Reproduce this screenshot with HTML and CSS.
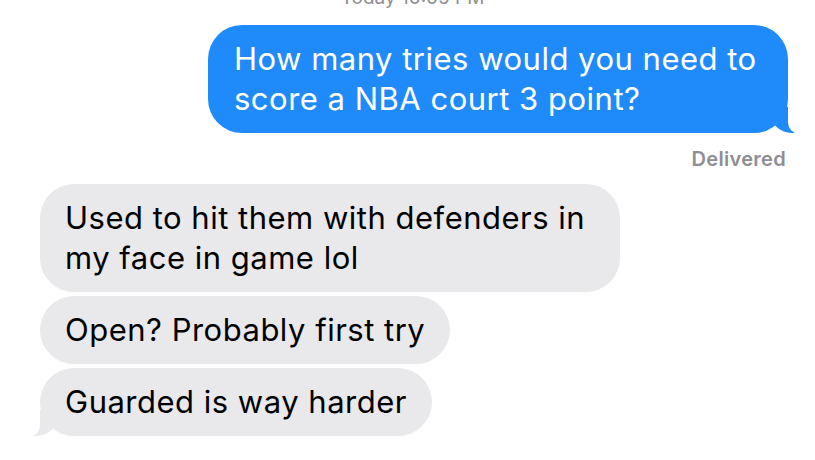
FILE: index.html
```html
<!DOCTYPE html>
<html lang="en">
<head>
  <meta charset="UTF-8" />
  <meta name="viewport" content="width=device-width, initial-scale=1.0"/>
  <title>Messages</title>
  <link rel="stylesheet" href="styles.css">
</head>
<body>
  <div class="thread">
    <div class="stamp">Today 10:05 PM</div>

    <div class="bubble out tail">How many tries would you need to score a NBA court 3 point?</div>
    <div class="status">Delivered</div>

    <div class="bubble in">Used to hit them with defenders in my face in game lol</div>
    <div class="bubble in">Open? Probably first try</div>
    <div class="bubble in tail">Guarded is way harder</div>
  </div>
</body>
</html>
```

FILE: styles.css
```css
body {
  margin: 0;
  background: #fff;
  font-family: Inter, "Liberation Sans", Arial, sans-serif;
}
.thread {
  display: flex;
  flex-direction: column;
  overflow: hidden;
  height: 460px;
}
.stamp {
  margin-top: -13px;
  text-align: center;
  font-size: 19px;
  line-height: 22px;
  color: #8e8e93;
  padding-left: 10px;
}
.bubble {
  position: relative;
  max-width: 530px;
  font-size: 31px;
  line-height: 40px;
  letter-spacing: 0.5px;
  padding: 14px 25px;
  border-radius: 34px;
}
.out {
  align-self: flex-end;
  margin: 16px 27px 0 0;
  padding-left: 26px;
  max-width: 529px;
  background: #1f8bfa;
  color: #fff;
}
.in {
  align-self: flex-start;
  margin: 4px 0 0 40px;
  background: #e9e9eb;
  color: #000;
}
.status {
  align-self: flex-end;
  margin: 14px 29px 9px 0;
  font-size: 20px;
  font-weight: 600;
  letter-spacing: 0.3px;
  color: #8e8e93;
}

/* little curled tail on the last bubble of a run */
.tail::before,
.tail::after {
  content: "";
  position: absolute;
  bottom: 0;
}
.out.tail::before {
  right: -9px;
  height: 26px;
  border-right: 26px solid #1f8bfa;
  border-bottom-left-radius: 22px 18px;
}
.out.tail::after {
  right: -18px;
  width: 18px;
  height: 27px;
  bottom: -1px;
  background: #fff;
  border-bottom-left-radius: 12px;
}
.in.tail::before {
  left: -9px;
  height: 26px;
  border-left: 26px solid #e9e9eb;
  border-bottom-right-radius: 22px 18px;
}
.in.tail::after {
  left: -18px;
  width: 18px;
  height: 27px;
  bottom: -1px;
  background: #fff;
  border-bottom-right-radius: 12px;
}
```
